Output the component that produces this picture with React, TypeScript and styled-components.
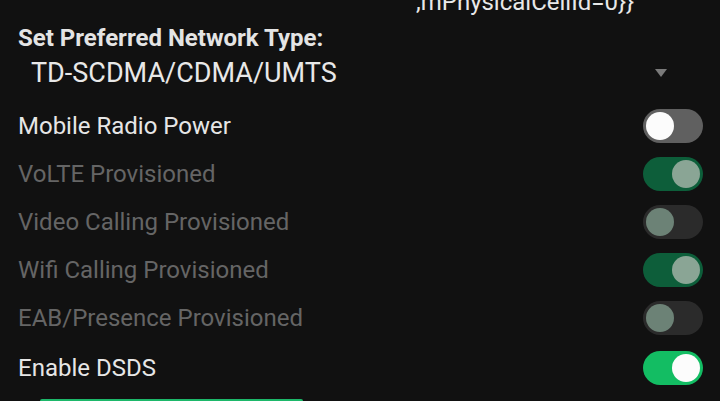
import React from 'react';
import styled, { createGlobalStyle } from 'styled-components';

const GlobalStyle = createGlobalStyle`
  html, body {
    margin: 0;
    padding: 0;
    background: #111111;
    overflow: hidden;
  }
  body {
    font-family: Roboto, "Noto Sans", sans-serif;
  }
`;

const Screen = styled.div`
  width: 720px;
  height: 401px;
  background: #111111;
  overflow: hidden;
  display: flex;
  flex-direction: column;
  & > * {
    flex-shrink: 0;
  }
`;

const InfoTail = styled.div`
  margin-top: -12px;
  padding-left: 416px;
  font-size: 24px;
  line-height: 28px;
  color: #e8e8e8;
  white-space: nowrap;
`;

const SectionTitle = styled.div`
  margin-top: 7px;
  padding-left: 18px;
  font-size: 24px;
  font-weight: 700;
  line-height: 30px;
  color: #e4e4e4;
`;

const Spinner = styled.div`
  display: flex;
  align-items: center;
  justify-content: space-between;
  height: 40px;
  padding: 0 53px 0 31px;
  font-size: 27px;
  color: #e8e8e8;
`;

const Arrow = styled.div`
  width: 0;
  height: 0;
  border-left: 6px solid transparent;
  border-right: 6px solid transparent;
  border-top: 8px solid #7a7a7a;
`;

const List = styled.div`
  margin-top: 9px;
  display: flex;
  flex-direction: column;
`;

const Row = styled.div<{ $gap?: boolean }>`
  display: flex;
  align-items: center;
  justify-content: space-between;
  height: 48px;
  margin-top: ${(p) => (p.$gap ? '2px' : '0')};
  padding: 0 17px 0 18px;
`;

const Label = styled.span<{ $disabled?: boolean }>`
  font-size: 24px;
  color: ${(p) => (p.$disabled ? '#656565' : '#e6e6e6')};
`;

const Track = styled.div<{ $on: boolean; $disabled?: boolean }>`
  width: 60px;
  height: 34px;
  border-radius: 17px;
  box-sizing: border-box;
  padding: 3px;
  display: flex;
  justify-content: ${(p) => (p.$on ? 'flex-end' : 'flex-start')};
  background: ${(p) =>
    p.$on
      ? p.$disabled
        ? '#0d5e3a'
        : '#13bd63'
      : p.$disabled
        ? '#2b2b2b'
        : '#606060'};
`;

const Thumb = styled.div<{ $on: boolean; $disabled?: boolean }>`
  width: 28px;
  height: 28px;
  border-radius: 50%;
  background: ${(p) =>
    p.$disabled ? (p.$on ? '#8aa595' : '#6c8276') : '#fcfcfc'};
`;

const ActionButton = styled.div`
  margin: 7px 0 0 40px;
  width: 263px;
  height: 40px;
  border-radius: 2px;
  background: #1db86a;
`;

const toggles = [
  { label: 'Mobile Radio Power', on: false, disabled: false },
  { label: 'VoLTE Provisioned', on: true, disabled: true },
  { label: 'Video Calling Provisioned', on: false, disabled: true },
  { label: 'Wifi Calling Provisioned', on: true, disabled: true },
  { label: 'EAB/Presence Provisioned', on: false, disabled: true },
  { label: 'Enable DSDS', on: true, disabled: false },
];

export default function App() {
  return (
    <Screen>
      <GlobalStyle />
      <InfoTail>{',mPhysicalCellId=0}}'}</InfoTail>
      <SectionTitle>Set Preferred Network Type:</SectionTitle>
      <Spinner>
        <span>TD-SCDMA/CDMA/UMTS</span>
        <Arrow />
      </Spinner>
      <List>
        {toggles.map((t, i) => (
          <Row key={t.label} $gap={i === toggles.length - 1}>
            <Label $disabled={t.disabled}>{t.label}</Label>
            <Track $on={t.on} $disabled={t.disabled}>
              <Thumb $on={t.on} $disabled={t.disabled} />
            </Track>
          </Row>
        ))}
      </List>
      <ActionButton />
    </Screen>
  );
}
